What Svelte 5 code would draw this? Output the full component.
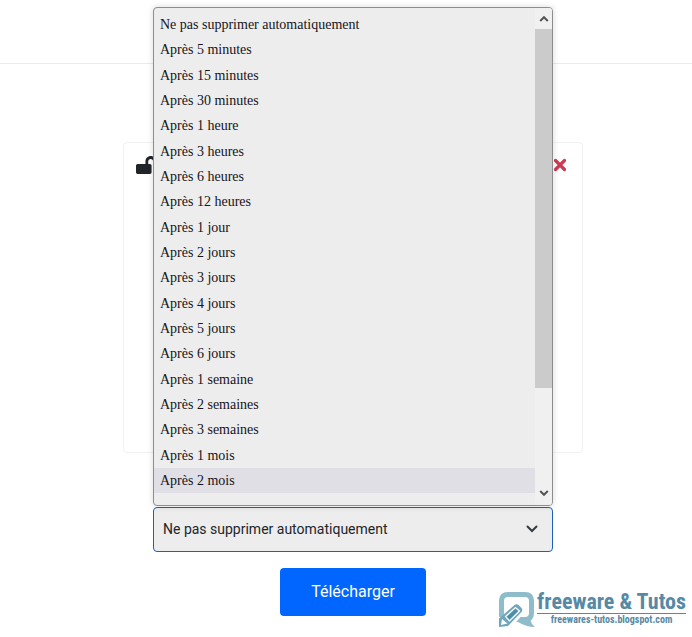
<script lang="ts">
  const delays = [
    'Ne pas supprimer automatiquement',
    'Après 5 minutes',
    'Après 15 minutes',
    'Après 30 minutes',
    'Après 1 heure',
    'Après 3 heures',
    'Après 6 heures',
    'Après 12 heures',
    'Après 1 jour',
    'Après 2 jours',
    'Après 3 jours',
    'Après 4 jours',
    'Après 5 jours',
    'Après 6 jours',
    'Après 1 semaine',
    'Après 2 semaines',
    'Après 3 semaines',
    'Après 1 mois',
    'Après 2 mois'
  ];

  let selected = $state(delays[0]);
  let active = $state('Après 2 mois');
  let open = $state(true);
  let list = $state<HTMLElement>();

  function choose(delay: string) {
    selected = delay;
    open = false;
  }

  function toggle(e: MouseEvent) {
    e.preventDefault();
    open = !open;
  }
</script>

<div class="page">
  <header></header>

  <main>
    <section class="card">
      <button class="icon-btn" aria-label="Verrouiller">
        <svg width="20" height="18" viewBox="0 0 576 512"><path fill="#212529" d="M423.500 0C339.500.3 272 69.500 272 153.500V224H48c-26.500 0-48 21.500-48 48v192c0 26.500 21.500 48 48 48h352c26.500 0 48-21.500 48-48V272c0-26.500-21.500-48-48-48h-48v-71.100c0-39.600 31.700-72.500 71.300-72.900 40-.4 72.700 32.100 72.700 72v80c0 13.300 10.700 24 24 24h32c13.300 0 24-10.700 24-24v-80C576 68 507.500-.3 423.500 0z" /></svg>
      </button>
      <button class="icon-btn" aria-label="Supprimer">
        <svg width="14" height="14" viewBox="0 0 14 14"><path d="M2.500 2.500l9 9M11.500 2.500l-9 9" stroke="#cb3a50" stroke-width="3.200" stroke-linecap="round" /></svg>
      </button>
    </section>

    <form onsubmit={(e) => e.preventDefault()}>
      <div class="field">
        {#if open}
          <div class="popup">
            <div class="options" role="listbox" aria-label="Suppression automatique" tabindex="-1" bind:this={list}>
              {#each delays as delay}
                <button
                  type="button"
                  role="option"
                  aria-selected={delay === selected}
                  class="option"
                  class:active={delay === active}
                  onmouseenter={() => (active = delay)}
                  onclick={() => choose(delay)}
                >{delay}</button>
              {/each}
            </div>
            <div class="scrollbar">
              <button type="button" class="arrow" aria-label="Monter" onclick={() => list?.scrollBy(0, -25)}>
                <svg width="10" height="8" viewBox="0 0 10 8"><path d="M1.200 6L5 2.200 8.800 6" /></svg>
              </button>
              <div class="track"><div class="thumb"></div></div>
              <button type="button" class="arrow down" aria-label="Descendre" onclick={() => list?.scrollBy(0, 25)}>
                <svg width="10" height="8" viewBox="0 0 10 8"><path d="M1.200 2L5 5.800 8.800 2" /></svg>
              </button>
            </div>
          </div>
        {/if}
        <select aria-label="Suppression automatique" bind:value={selected} onmousedown={toggle}>
          {#each delays as delay}
            <option value={delay}>{delay}</option>
          {/each}
        </select>
        <svg class="chevron" width="12" height="8" viewBox="0 0 12 8"><path d="M1.500 1.500L6 6l4.500-4.500" /></svg>
      </div>
      <button class="submit">Télécharger</button>
    </form>
  </main>

  <a class="brand" href="#top">
    <svg width="38" height="38" viewBox="0 0 38 38">
      <path fill="none" stroke="#8fbccb" stroke-width="5" d="M3.500 26V10Q3.500 3.500 10 3.500H27Q33.500 3.500 33.500 10V22Q33.500 28.500 27 28.500H20" />
      <path fill="#8fbccb" d="M20 26L32 26Q32 32 37 36Q28 36 20 31L17 31z" />
      <path fill="#fff" d="M0 31L16 11.500H20L27 18V21L12 38H0z" />
      <path fill="#6fa6bb" d="M1 36V27.500L16.500 14Q18.500 12.500 20.500 14L23.500 17Q25 19 23.500 21L10 35z" />
      <path fill="#4f8ca8" d="M9 26L17.500 18 20 20 11.500 28.500z" />
      <path fill="none" stroke="#fff" stroke-width="1.200" d="M7.500 25.500L17.500 16.500 21.500 20 11.500 30z" />
      <path fill="#fff" d="M4 28L9.500 32.500 3 34z" />
    </svg>
    <span class="brand-text">
      <span class="brand-name">freeware &amp; Tutos</span>
      <span class="brand-url">freewares-tutos.blogspot.com</span>
    </span>
  </a>
</div>

<style>
  :global(body) { margin: 0; background: #fff; }
  .page { position: relative; min-height: 100vh; font-family: Roboto, sans-serif; color: #212529; }
  button { font-family: inherit; border: none; padding: 0; cursor: pointer; }
  svg { display: block; }

  header { height: 63px; border-bottom: 1px solid #ebebeb; }
  main { display: flex; flex-direction: column; align-items: center; padding: 78px 0 20px 14px; }

  .card {
    box-sizing: border-box; width: 100%; max-width: 460px; min-height: 311px;
    display: flex; justify-content: space-between; align-items: flex-start;
    padding: 14px 15px 12px 12px; border: 1px solid #f1f1f1; border-radius: 4px;
  }
  .icon-btn { background: none; display: flex; align-items: center; height: 16px; }

  form { width: 100%; max-width: 400px; margin-top: 54px; display: flex; flex-direction: column; align-items: center; gap: 16px; }
  .field { position: relative; width: 100%; }
  select {
    display: block; box-sizing: border-box; width: 100%; height: 45px; padding: 0 36px 2px 9px;
    appearance: none; background: #ededed; border: 1px solid #1a62b8; border-radius: 4px;
    font: 14px Roboto, sans-serif; color: #212529; outline: none;
  }
  .chevron { position: absolute; right: 15px; top: 18px; pointer-events: none; }
  .chevron path { fill: none; stroke: #343a40; stroke-width: 2; stroke-linecap: round; }

  .popup {
    position: absolute; left: 0; right: 0; bottom: 100%; margin-bottom: 1px; z-index: 10;
    display: flex; box-sizing: border-box; height: 499px;
    background: #ededed; border: 1px solid #8e8e8e; border-radius: 4px; box-shadow: 0 0 6px rgba(0, 0, 0, 0.15);
  }
  .options { flex: 1; display: grid; grid-auto-rows: 1fr; padding: 4px 0 12px; overflow: hidden; }
  .option {
    background: none; text-align: left; padding: 1px 6px 0; color: #15141a;
    font: 14px "Liberation Serif", "Times New Roman", serif;
  }
  .option.active { background: #e0dfe6; }
  .scrollbar { width: 17px; display: flex; flex-direction: column; background: #f0f0f0; border-radius: 0 3px 3px 0; }
  .arrow { height: 21px; background: none; display: flex; align-items: center; justify-content: center; }
  .arrow.down { padding-bottom: 4px; }
  .arrow path { fill: none; stroke: #555; stroke-width: 2; }
  .track { flex: 1; }
  .thumb { height: 79%; background: #cbcbcb; }

  .submit { width: 146px; height: 48px; padding-bottom: 2px; border-radius: 4px; background: #0066ff; color: #fff; font-size: 16px; }

  .brand { position: absolute; right: 6px; bottom: 8px; display: flex; gap: 1px; text-decoration: none; color: #5689a5; }
  .brand-text { display: flex; flex-direction: column; align-items: center; font-family: "Roboto Condensed", Roboto, sans-serif; }
  .brand-name { font-size: 22px; line-height: 22px; font-weight: 700; border-bottom: 1px solid #5689a5; }
  .brand-url { font-size: 10px; line-height: 12px; font-weight: 700; }
</style>
